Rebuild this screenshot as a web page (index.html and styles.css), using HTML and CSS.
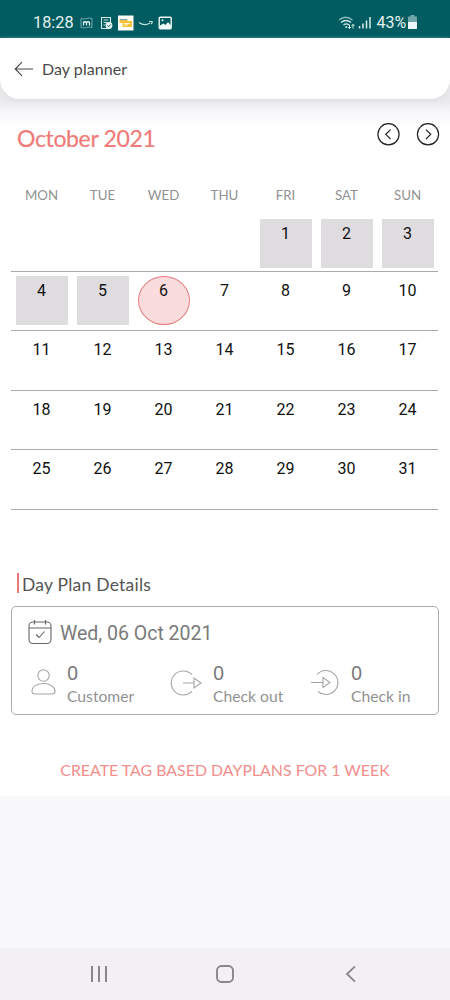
FILE: index.html
```html
<!DOCTYPE html>
<html lang="en">
<head>
<meta charset="utf-8">
<meta name="viewport" content="width=device-width, initial-scale=1">
<title>Day planner</title>
<link rel="stylesheet" href="styles.css">
</head>
<body>
<div class="screen">
  <div class="status">
    <span class="clock">18:28</span>
    <svg class="notifications" width="94" height="16" viewBox="0 0 94 16" fill="none">
      <path d="M1 3.500q3 1 5.500 0t5.500 0v9q-3-1-5.500 0t-5.500 0z" stroke="#8fbcbe" stroke-width=".8"/>
      <path d="M3.500 10.500v-4M3.500 7.500q1.500-1.500 3 0v3M6.500 7.500q1.500-1.500 3 0v3" stroke="#e9f4f4" stroke-width="1.200"/>
      <path d="M29 13.500h-7.500v-11h9v6" stroke="#d5e7e7" stroke-width="1.100"/>
      <path d="M23.500 5h5M23.500 7.500h4M23.500 10h2" stroke="#c4dddd"/>
      <circle cx="29" cy="10.500" r="3.400" fill="#e5f1f1"/>
      <path d="M27.500 10.500l1.200 1.200 2-2.200" stroke="#005c60"/>
      <path d="M38 .5h15.500v15H38z" fill="#fff"/>
      <path d="M39.500 4h8v2h4.500v6h-9.500V8h-3z" fill="#f5c13b"/>
      <path d="M40 4.500h7" stroke="#75a6bd" stroke-width="1.200"/>
      <path d="M44 8.500h6M44 10h4" stroke="#fff3cf"/>
      <path d="M59 7.500q5.500 4 11 .5M69 6.500h3.200q.3 1.500-1.200 2.500" stroke="#c4e1df" stroke-width="1.200"/>
      <rect x="79.200" y="2.200" width="12" height="11.600" rx="1" stroke="#eef8f7" stroke-width="1.400"/>
      <path d="M80 12.500v-2l3.500-2 2 1.500 2.500-3 3 3.500v3h-11z" fill="#eef8f7"/>
      <circle cx="82.500" cy="5.300" r="1" fill="#eef8f7"/>
    </svg>
    <svg class="signal" width="34" height="16" viewBox="0 0 34 16" fill="none" stroke="#d9ebeb" stroke-width="1.300">
      <path d="M1 5q6.500-5.500 13.500 0" stroke="#8dbabb"/>
      <path d="M3 7.500q5-4 10 0M5.500 10q2.700-2.200 5.500 0"/>
      <circle cx="8.200" cy="12" r="1" fill="#d9ebeb" stroke="none"/>
      <path d="M11.500 9.500v4M10 12l1.500 1.700L13 12M15 13.500v-4M13.500 11l1.500-1.700 1.500 1.700" stroke-width="1"/>
      <path d="M21.500 13.500v-2.500M25 13.500V8.500M28.500 13.500V5.500M32 13.500V2" stroke-width="1.500"/>
    </svg>
    <span class="percent">43%</span>
    <svg class="battery" width="9" height="14" viewBox="0 0 9 14"><path d="M2.500 0h4v1.500H9V7H0V1.500h2.500z" fill="#6ea5a7"/><path d="M0 7h9v7H0z" fill="#eef7f7"/></svg>
  </div>
  <main class="content">
    <header class="appbar">
      <svg class="back" width="20" height="16" viewBox="0 0 20 16" fill="none" stroke="#454545" stroke-width="1.100"><path d="M19 8H1.500M8 1.200L1.200 8 8 14.800"/></svg>
      <h1 class="appbar-title">Day planner</h1>
    </header>
    <div class="month">
      <h2 class="month-name">October 2021</h2>
      <div class="arrows">
        <svg width="24" height="24" viewBox="0 0 24 24" fill="none" stroke="#222" stroke-width="1.200"><circle cx="12.500" cy="12.300" r="10.600"/><path d="M14.500 7.600L9.800 12.300l4.700 4.700"/></svg>
        <svg width="24" height="24" viewBox="0 0 24 24" fill="none" stroke="#222" stroke-width="1.200"><circle cx="12" cy="12.300" r="10.600"/><path d="M10 7.600l4.700 4.700-4.700 4.700"/></svg>
      </div>
    </div>
    <div class="weekdays"><span>MON</span><span>TUE</span><span>WED</span><span>THU</span><span>FRI</span><span>SAT</span><span>SUN</span></div>
    <div class="weeks">
      <div class="week first"><span></span><span></span><span></span><span></span><span class="day past">1</span><span class="day past">2</span><span class="day past">3</span></div>
      <div class="week"><span class="day past">4</span><span class="day past">5</span><span class="day today">6</span><span class="day">7</span><span class="day">8</span><span class="day">9</span><span class="day">10</span></div>
      <div class="week"><span class="day">11</span><span class="day">12</span><span class="day">13</span><span class="day">14</span><span class="day">15</span><span class="day">16</span><span class="day">17</span></div>
      <div class="week"><span class="day">18</span><span class="day">19</span><span class="day">20</span><span class="day">21</span><span class="day">22</span><span class="day">23</span><span class="day">24</span></div>
      <div class="week"><span class="day">25</span><span class="day">26</span><span class="day">27</span><span class="day">28</span><span class="day">29</span><span class="day">30</span><span class="day">31</span></div>
    </div>
    <h3 class="details-title">Day Plan Details</h3>
    <section class="card">
      <div class="date">
        <svg width="24" height="26" viewBox="0 0 24 26" fill="none" stroke="#666" stroke-width="1.100"><rect x="1" y="2" width="22" height="21.500" rx="4"/><path d="M1 8h22M6.500 0v4.500M17.500 0v4.500M8 14.500l3 3 5.500-6"/></svg>
        <span class="date-text">Wed, 06 Oct 2021</span>
      </div>
      <div class="stats">
        <div class="stat">
          <svg width="25" height="28" viewBox="0 0 25 28" fill="none" stroke="#a5a5a5" stroke-width="1.100"><circle cx="12.500" cy="7.500" r="5.700"/><path d="M1 23.500c0-5 5-8 11.500-8S24 18.500 24 23.500c0 1.500-1 2.500-3 2.500H4c-2 0-3-1-3-2.500z"/></svg>
          <div class="stat-text"><span class="count">0</span><span class="label customer">Customer</span></div>
        </div>
        <div class="stat">
          <svg width="32" height="28" viewBox="0 0 32 28" fill="none" stroke="#a5a5a5" stroke-width="1.100"><path d="M22 6.800a12 12 0 1 0 0 16.400M13 15h11M24 10v10l7-5z"/></svg>
          <div class="stat-text"><span class="count">0</span><span class="label">Check out</span></div>
        </div>
        <div class="stat">
          <svg width="30" height="28" viewBox="0 0 30 28" fill="none" stroke="#a5a5a5" stroke-width="1.100"><path d="M7 6.500a12 12 0 1 1 1 17M1 14.500h12M13 9.500v10l7-5z"/></svg>
          <div class="stat-text"><span class="count">0</span><span class="label">Check in</span></div>
        </div>
      </div>
    </section>
    <div class="action">CREATE TAG BASED DAYPLANS FOR 1 WEEK</div>
  </main>
  <nav class="navbar">
    <svg width="18" height="18" viewBox="0 0 18 18" fill="none" stroke="#88868a" stroke-width="2"><path d="M2 1v16M9 1v16M16 1v16"/></svg>
    <svg width="18" height="18" viewBox="0 0 18 18" fill="none" stroke="#88868a" stroke-width="1.900"><rect x="1" y="1" width="16" height="16" rx="4.500"/></svg>
    <svg width="18" height="18" viewBox="0 0 18 18" fill="none" stroke="#88868a" stroke-width="1.800"><path d="M13 1.300L5 9l8 7.700"/></svg>
  </nav>
</div>
</body>
</html>
```

FILE: styles.css
```css
* { box-sizing: border-box; }
body { margin: 0; font-family: Lato, "Open Sans", sans-serif; }
h1, h2, h3 { margin: 0; font-weight: 400; }
svg { display: block; flex: none; }
.screen { width: 450px; height: 1000px; display: flex; flex-direction: column; background: #f8f7fa; overflow: hidden; }
.status { height: 38px; flex: none; display: flex; align-items: center; padding: 7px 33px 0 33px; background: #005c60; color: #e4f1f1; font-family: Roboto, sans-serif; font-size: 16px; }
.clock { width: 41px; font-size: 16.3px; white-space: nowrap; }
.notifications { margin-left: 6px; }
.signal { margin-left: auto; }
.percent { margin: 0 2px 0 5px; letter-spacing: -.1px; }
.battery { margin-top: -1px; }
.content { height: 758px; flex: none; background: linear-gradient(#e4e3e6 0, #e9e8eb 62px, #f5f4f6 72px, #fcfbfd 84px, #fff 92px); }
.appbar { height: 61px; display: flex; align-items: center; padding: 0 14px; background: #fff; border-radius: 0 0 20px 20px; box-shadow: 0 2px 5px #e2e0e4; }
.appbar-title { margin-left: 8px; font-size: 16px; color: #4a4a4a; letter-spacing: .05px; }
.month { height: 72px; display: flex; justify-content: space-between; padding: 23px 10px 0 17px; }
.month-name { font-size: 23px; line-height: 33px; letter-spacing: -.35px; color: #ef7b78; -webkit-text-stroke: .2px #ef7b78; }
.arrows { display: flex; gap: 16px; }
.weekdays { height: 41px; display: grid; grid-template-columns: repeat(7, 1fr); padding: 14px 12px 0 11px; text-align: center; font-size: 13.300px; line-height: 20px; color: #929292; }
.weeks { margin: 0 12px 0 11px; }
.week { height: 59.600px; display: grid; grid-template-columns: repeat(7, 1fr); justify-items: center; padding-top: 4.500px; border-bottom: 1px solid #aaa; }
.week.first { padding-top: 7px; }
.day { width: 52px; height: 49px; padding-top: 4.500px; text-align: center; font: 16px/20px Roboto, sans-serif; color: #111; }
.past { background: #dfdce0; }
.today { background: #fbdcdc; border: 1px solid #e57d82; border-radius: 50%; padding-top: 3.500px; }
.details-title { margin: 63.500px 0 0 17px; height: 20px; border-left: 2px solid #ef7774; padding-left: 3px; font-size: 17.500px; line-height: 23px; letter-spacing: .23px; color: #555; }
.card { height: 109px; margin: 13px 11px 0; border: 1px solid #aaa; border-radius: 5px; padding: 12px 15px 0 16px; }
.date { height: 27px; display: flex; align-items: center; gap: 8px; }
.date-text { font: 19.500px/26px Roboto, sans-serif; color: #7a7a7a; padding-top: 2px; }
.stats { display: grid; grid-template-columns: 139px 140px 1fr; margin: 14px 0 0 3px; }
.stat { display: flex; gap: 11px; }
.stat svg { margin-top: 8px; }
.stat-text { display: flex; flex-direction: column; color: #777; }
.count { font: 19.500px/26px "Noto Sans", sans-serif; }
.label { font-size: 15.700px; line-height: 20px; color: #929292; white-space: nowrap; }
.action { margin-top: 44px; text-align: center; font-size: 15.900px; line-height: 22px; color: #f28e8c; white-space: nowrap; }
.navbar { height: 52px; flex: none; margin-top: auto; padding: 0 90px; display: flex; justify-content: space-between; align-items: center; background: #f2f0f3; }
```
